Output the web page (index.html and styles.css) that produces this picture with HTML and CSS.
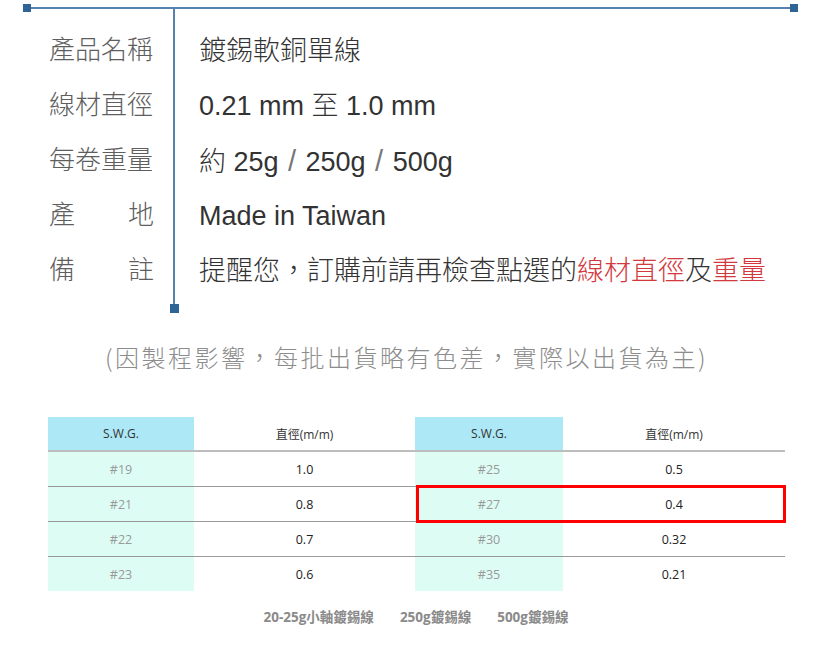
FILE: index.html
```html
<!DOCTYPE html>
<html lang="zh-Hant">
<head>
<meta charset="utf-8">
<title>鍍錫軟銅單線</title>
<link rel="stylesheet" href="styles.css">
</head>
<body>
<div class="page">
  <section class="spec">
    <div class="topbar"><span class="sq"></span><span class="rule"></span><span class="sq"></span></div>
    <div class="spec-body">
      <div class="labels">
        <div class="label">產品名稱</div>
        <div class="label">線材直徑</div>
        <div class="label">每卷重量</div>
        <div class="label spread"><span>產</span><span>地</span></div>
        <div class="label spread"><span>備</span><span>註</span></div>
      </div>
      <div class="values">
        <div class="value">鍍錫軟銅單線</div>
        <div class="value">0.21 mm 至 1.0 mm</div>
        <div class="value">約 25g<span class="slash">/</span>250g<span class="slash">/</span>500g</div>
        <div class="value">Made in Taiwan</div>
        <div class="value">提醒您，訂購前請再檢查點選的<span class="red">線材直徑</span>及<span class="red">重量</span></div>
      </div>
    </div>
  </section>

  <p class="note">(因製程影響，每批出貨略有色差，實際以出貨為主)</p>

  <div class="table-wrap">
    <table class="swg">
      <thead>
        <tr><th class="g">S.W.G.</th><th>直徑(m/m)</th><th class="g">S.W.G.</th><th>直徑(m/m)</th></tr>
      </thead>
      <tbody>
        <tr><td class="g">#19</td><td>1.0</td><td class="g">#25</td><td>0.5</td></tr>
        <tr><td class="g">#21</td><td>0.8</td><td class="g">#27</td><td>0.4</td></tr>
        <tr><td class="g">#22</td><td>0.7</td><td class="g">#30</td><td>0.32</td></tr>
        <tr><td class="g">#23</td><td>0.6</td><td class="g">#35</td><td>0.21</td></tr>
      </tbody>
    </table>
    <div class="highlight"></div>
  </div>

  <nav class="links">
    <a>20-25g小軸鍍錫線</a>
    <a>250g鍍錫線</a>
    <a>500g鍍錫線</a>
  </nav>
</div>
</body>
</html>
```

FILE: styles.css
```css
html, body {
  margin: 0;
  padding: 0;
  background: #fff;
}

.page {
  width: 830px;
  height: 652px;
  overflow: hidden;
}

.topbar {
  display: flex;
  align-items: center;
  height: 8px;
  margin: 4px 32px 0 23px;
}

.sq {
  width: 8px;
  height: 8px;
  background: #2f6596;
  flex: none;
}

.rule {
  flex: 1;
  height: 2px;
  background: #5683ad;
}

.spec-body {
  display: flex;
  margin-top: -3px;
}

.labels {
  position: relative;
  width: 105px;
  margin-left: 49px;
  padding: 11px 19px 9px 0;
  border-right: 2px solid #5683ad;
}

.labels::after {
  content: "";
  position: absolute;
  right: -6px;
  bottom: -9px;
  width: 9px;
  height: 9px;
  background: #2f6596;
}

.label {
  font-family: "Noto Sans CJK TC", "Noto Sans", sans-serif;
  font-weight: 300;
  font-size: 26px;
  line-height: 55px;
  height: 55px;
  color: #5e5e5e;
  white-space: nowrap;
}

.spread {
  display: flex;
  justify-content: space-between;
}

.values {
  padding: 15px 0 0 24px;
}

.value {
  font-family: "Liberation Sans", "Noto Sans CJK TC", sans-serif;
  font-weight: 300;
  font-size: 27px;
  line-height: 55px;
  height: 55px;
  color: #333;
  white-space: nowrap;
}

.slash {
  display: inline-block;
  width: 27px;
  text-align: center;
  font-size: 29px;
  color: #777;
}

.red {
  color: #d2393e;
}

.note {
  margin: 36px 0 0 0;
  padding-left: 105px;
  font-family: "Noto Sans CJK TC", sans-serif;
  font-weight: 300;
  font-size: 24px;
  line-height: 34px;
  letter-spacing: 2.5px;
  color: #8c8c8c;
  white-space: nowrap;
}

.table-wrap {
  position: relative;
  width: 737px;
  margin: 43px 0 0 48px;
}

.swg {
  width: 737px;
  border-collapse: collapse;
  table-layout: fixed;
  font-family: "Open Sans", "Noto Sans CJK TC", sans-serif;
  font-size: 12px;
  color: #333;
}

.swg th, .swg td {
  text-align: center;
  padding: 0;
}

.swg th {
  height: 33px;
  font-weight: 400;
  border-bottom: 2px solid #bdbdbd;
}

.swg th:nth-child(1) { width: 146px; }
.swg th:nth-child(2) { width: 221px; }
.swg th:nth-child(3) { width: 148px; }
.swg th:nth-child(4) { width: 222px; }

.swg th.g {
  background: #ade8f7;
}

.swg td {
  height: 34px;
  font-size: 12.5px;
  color: #222;
  border-bottom: 1px solid #9a9a9a;
}

.swg tbody tr:last-child td {
  border-bottom: none;
}

.swg td.g {
  background: #ddfcf4;
  color: #999;
}

.highlight {
  position: absolute;
  left: 368px;
  top: 68px;
  width: 364px;
  height: 32px;
  border: 3px solid #ff0000;
}

.links {
  display: flex;
  justify-content: center;
  gap: 26px;
  margin-top: 16px;
  padding-left: 2px;
}

.links a {
  font-family: "Open Sans", "Noto Sans CJK TC", sans-serif;
  font-weight: 700;
  font-size: 13.5px;
  line-height: 20px;
  color: #8a8a8a;
  text-decoration: none;
}
```
